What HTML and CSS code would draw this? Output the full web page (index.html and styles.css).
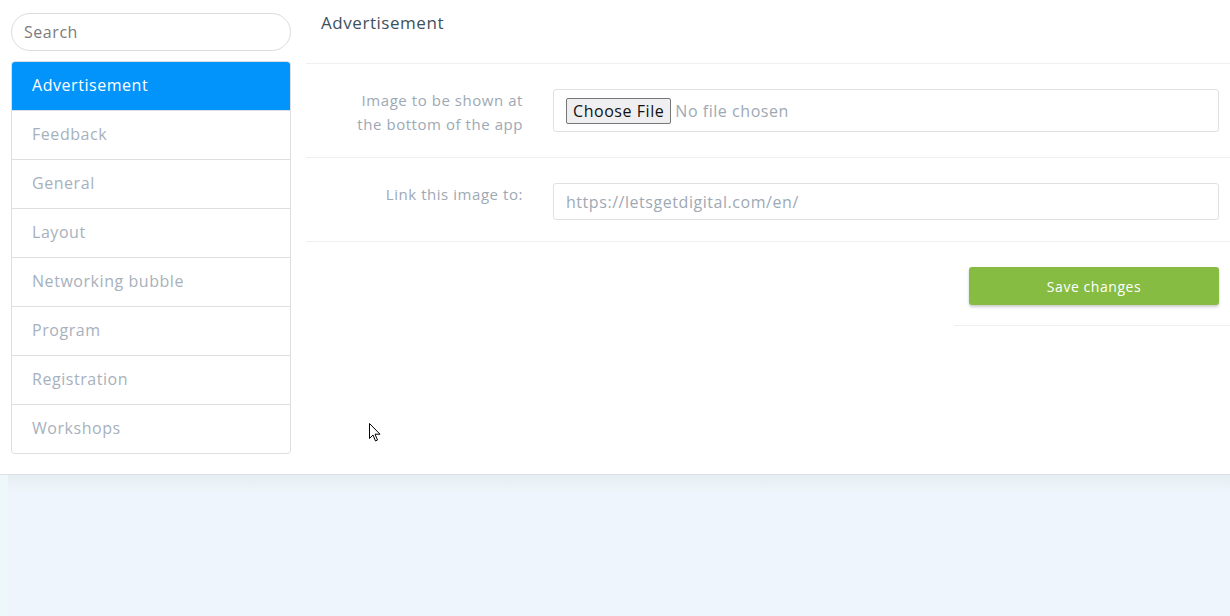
FILE: index.html
```html
<!DOCTYPE html>
<html lang="en">
    <head>
        <meta charset="UTF-8">
        <meta name="viewport" content="width=device-width, initial-scale=1.0">
        <title>Settings - Advertisement</title>
        <link rel="stylesheet" href="styles.css">
    </head>
    <body>
        <div class="panel">
            <div class="sidebar">
                <input type="text" class="search" placeholder="Search">
                <ul class="menu">
                    <li class="active">Advertisement</li>
                    <li>Feedback</li>
                    <li>General</li>
                    <li>Layout</li>
                    <li>Networking bubble</li>
                    <li>Program</li>
                    <li>Registration</li>
                    <li>Workshops</li>
                </ul>
            </div>

            <div class="content">
                <h1 class="title">Advertisement</h1>

                <div class="row">
                    <label class="label">Image to be shown at the bottom of the app</label>
                    <div class="field field-file">
                        <span class="file-btn">Choose File</span>
                        <span class="file-name">No file chosen</span>
                    </div>
                </div>

                <div class="row row-link">
                    <label class="label">Link this image to:</label>
                    <input type="text" class="field" value="https://letsgetdigital.com/en/">
                </div>

                <div class="actions">
                    <button class="btn-save">Save changes</button>
                </div>
            </div>

            <svg class="cursor" width="12" height="20" viewBox="0 0 12 20">
                <path d="M0.5 0.5 L0.5 15.5 L4 12 L6.5 18 L8.5 17 L6 11.2 L11 11.2 Z" fill="#fff" stroke="#000" stroke-width="1"/>
            </svg>
        </div>
        <div class="page-bottom"></div>
    </body>
</html>
```

FILE: styles.css
```css
* {
    margin: 0;
    padding: 0;
    box-sizing: border-box;
    font-family: "Open Sans", Arial, sans-serif;
    letter-spacing: 0.55px;
}

body {
    background-color: #eef8fb;
}

.panel {
    position: relative;
    display: flex;
    height: 475px;
    background-color: #fff;
    border-bottom: 1px solid #dcdfe6;
}

.sidebar {
    width: 306px;
    padding: 13px 15px 0 11px;
}

.search {
    display: block;
    width: 100%;
    height: 38px;
    border: 1px solid #dcdcdc;
    border-radius: 19px;
    padding: 0 12px;
    font-size: 16px;
    color: #555;
    background: #fff;
    outline: none;
}

.search::placeholder {
    color: #7b7b7b;
}

.menu {
    list-style: none;
    margin-top: 10px;
    border: 1px solid #dedfe3;
    border-radius: 4px;
    background: #fff;
    overflow: hidden;
}

.menu li {
    height: 49px;
    line-height: 47px;
    padding-left: 20px;
    font-size: 16px;
    color: #a7b1bd;
    border-top: 1px solid #dedfe3;
}

.menu li:first-child {
    border-top: none;
    height: 48px;
}

.menu li.active {
    background-color: #0394fb;
    color: #fff;
}

.content {
    flex: 1;
}

.title {
    font-size: 17px;
    font-weight: normal;
    color: #3e505e;
    height: 64px;
    padding: 11px 0 0 15px;
    border-bottom: 1px solid #eeeff1;
}

.row {
    display: flex;
    align-items: flex-start;
    padding: 24px 11px 25px 0;
    border-bottom: 1px solid #eeeff1;
}

.label {
    width: 180px;
    margin: 0 30px -4px 37px;
    text-align: right;
    font-size: 15px;
    line-height: 24px;
    color: #9ea9b4;
}

.field {
    flex: 1;
    height: 43px;
    margin-top: 1px;
    border: 1px solid #dfe0e3;
    border-radius: 3px;
    background: #fff;
    font-size: 16px;
    color: #9ea9b4;
    padding: 0 12px;
    outline: none;
}

.field-file {
    display: flex;
    align-items: center;
}

.file-btn {
    font-size: 16px;
    color: #111;
    background: #efeff1;
    border: 1px solid #767676;
    border-radius: 2px;
    padding: 0 6px;
    line-height: 24px;
    margin-right: 4px;
}

.row-link {
    padding-top: 24px;
    padding-bottom: 21px;
}

.row-link .field {
    height: 37px;
}

.actions {
    display: flex;
    justify-content: flex-end;
    margin-left: 648px;
    padding: 25px 11px 20px 14px;
    border-bottom: 1px solid #eeeff1;
}

.btn-save {
    width: 250px;
    height: 38px;
    border: none;
    border-radius: 3px;
    background-color: #86bc42;
    color: #fff;
    font-size: 14px;
    box-shadow: 0 2px 3px rgba(0, 0, 0, 0.2);
    cursor: pointer;
}

.cursor {
    position: absolute;
    left: 369px;
    top: 423px;
}

.page-bottom {
    height: 141px;
    margin-left: 8px;
    background-color: #eef5fc;
    background-image: linear-gradient(#e6eef2, #eef5fc 18px);
}
```
